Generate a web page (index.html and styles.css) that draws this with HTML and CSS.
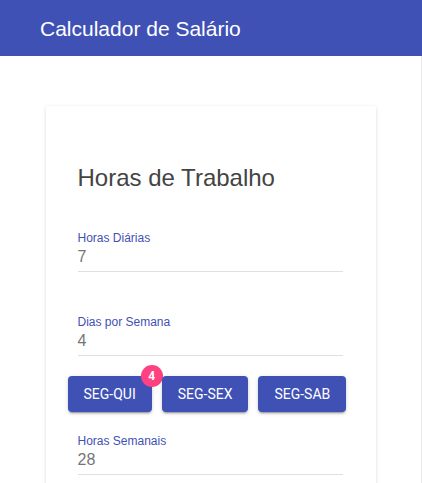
FILE: index.html
```html
<!DOCTYPE html>
<html lang="pt">
<head>
<meta charset="utf-8">
<title>Calculador de Salário</title>
<link rel="stylesheet" href="styles.css">
</head>
<body>
<header class="toolbar">
  <span class="toolbar-title">Calculador de Salário</span>
</header>
<main class="page">
  <section class="card">
    <h2 class="card-title">Horas de Trabalho</h2>
    <div class="field field-first">
      <label class="field-label">Horas Diárias</label>
      <div class="field-value">7</div>
    </div>
    <div class="field field-second">
      <label class="field-label">Dias por Semana</label>
      <div class="field-value">4</div>
    </div>
    <div class="button-row">
      <button class="btn">SEG-QUI<span class="badge">4</span></button>
      <button class="btn">SEG-SEX</button>
      <button class="btn">SEG-SAB</button>
    </div>
    <div class="field field-third">
      <label class="field-label">Horas Semanais</label>
      <div class="field-value">28</div>
    </div>
  </section>
</main>
</body>
</html>
```
FILE: styles.css
```css
* { box-sizing: border-box; }
html, body {
  margin: 0;
  padding: 0;
  height: 100%;
  overflow: hidden;
  background: #fff;
  font-family: "Liberation Sans", Arial, sans-serif;
}
.toolbar {
  height: 56px;
  background: #3f51b5;
  color: #fff;
  display: flex;
  align-items: center;
  padding: 0 40px;
}
.toolbar-title {
  font-size: 21px;
  line-height: 24px;
  padding-top: 1px;
  white-space: nowrap;
}
.page {
  display: flex;
  justify-content: center;
  padding-top: 50px;
  border-right: 1px solid #ececec;
  height: calc(100% - 56px);
}
.card {
  width: 330px;
  height: 380px;
  flex: none;
  background: #fff;
  border-radius: 2px;
  box-shadow: 0 2px 1px -1px rgba(0,0,0,.2), 0 1px 1px 0 rgba(0,0,0,.14), 0 1px 4px 0 rgba(0,0,0,.12);
  padding: 56px 33px 0 32px;
}
.card-title {
  margin: 0;
  font-size: 24px;
  line-height: 32px;
  font-weight: normal;
  color: #444;
  white-space: nowrap;
}
.field {
  border-bottom: 1px solid #e0e0e0;
  padding-bottom: 4px;
}
.field-first { margin-top: 37px; }
.field-second { margin-top: 43px; }
.field-third { margin-top: 22px; }
.field-label {
  display: block;
  font-size: 12px;
  line-height: 14px;
  color: #3f51b5;
  white-space: nowrap;
}
.field-value {
  margin-top: 2px;
  font-size: 16px;
  line-height: 20px;
  color: #757575;
}
.button-row {
  display: flex;
  gap: 10px;
  margin: 20px 0 0 -10px;
}
.btn {
  position: relative;
  flex: none;
  height: 36px;
  padding: 0 16px;
  border: none;
  border-radius: 4px;
  background: #3f51b5;
  color: #fff;
  font-family: Roboto, "Liberation Sans", Arial, sans-serif;
  font-size: 14px;
  font-weight: 400;
  line-height: 36px;
  white-space: nowrap;
  box-shadow: 0 3px 1px -2px rgba(0,0,0,.2), 0 2px 2px 0 rgba(0,0,0,.14), 0 1px 5px 0 rgba(0,0,0,.12);
}
.badge {
  position: absolute;
  top: -11px;
  right: -11px;
  width: 22px;
  height: 22px;
  border-radius: 50%;
  background: #ff4081;
  color: #fff;
  font-family: Roboto, "Liberation Sans", Arial, sans-serif;
  font-size: 12px;
  font-weight: bold;
  line-height: 22px;
  text-align: center;
}
```
